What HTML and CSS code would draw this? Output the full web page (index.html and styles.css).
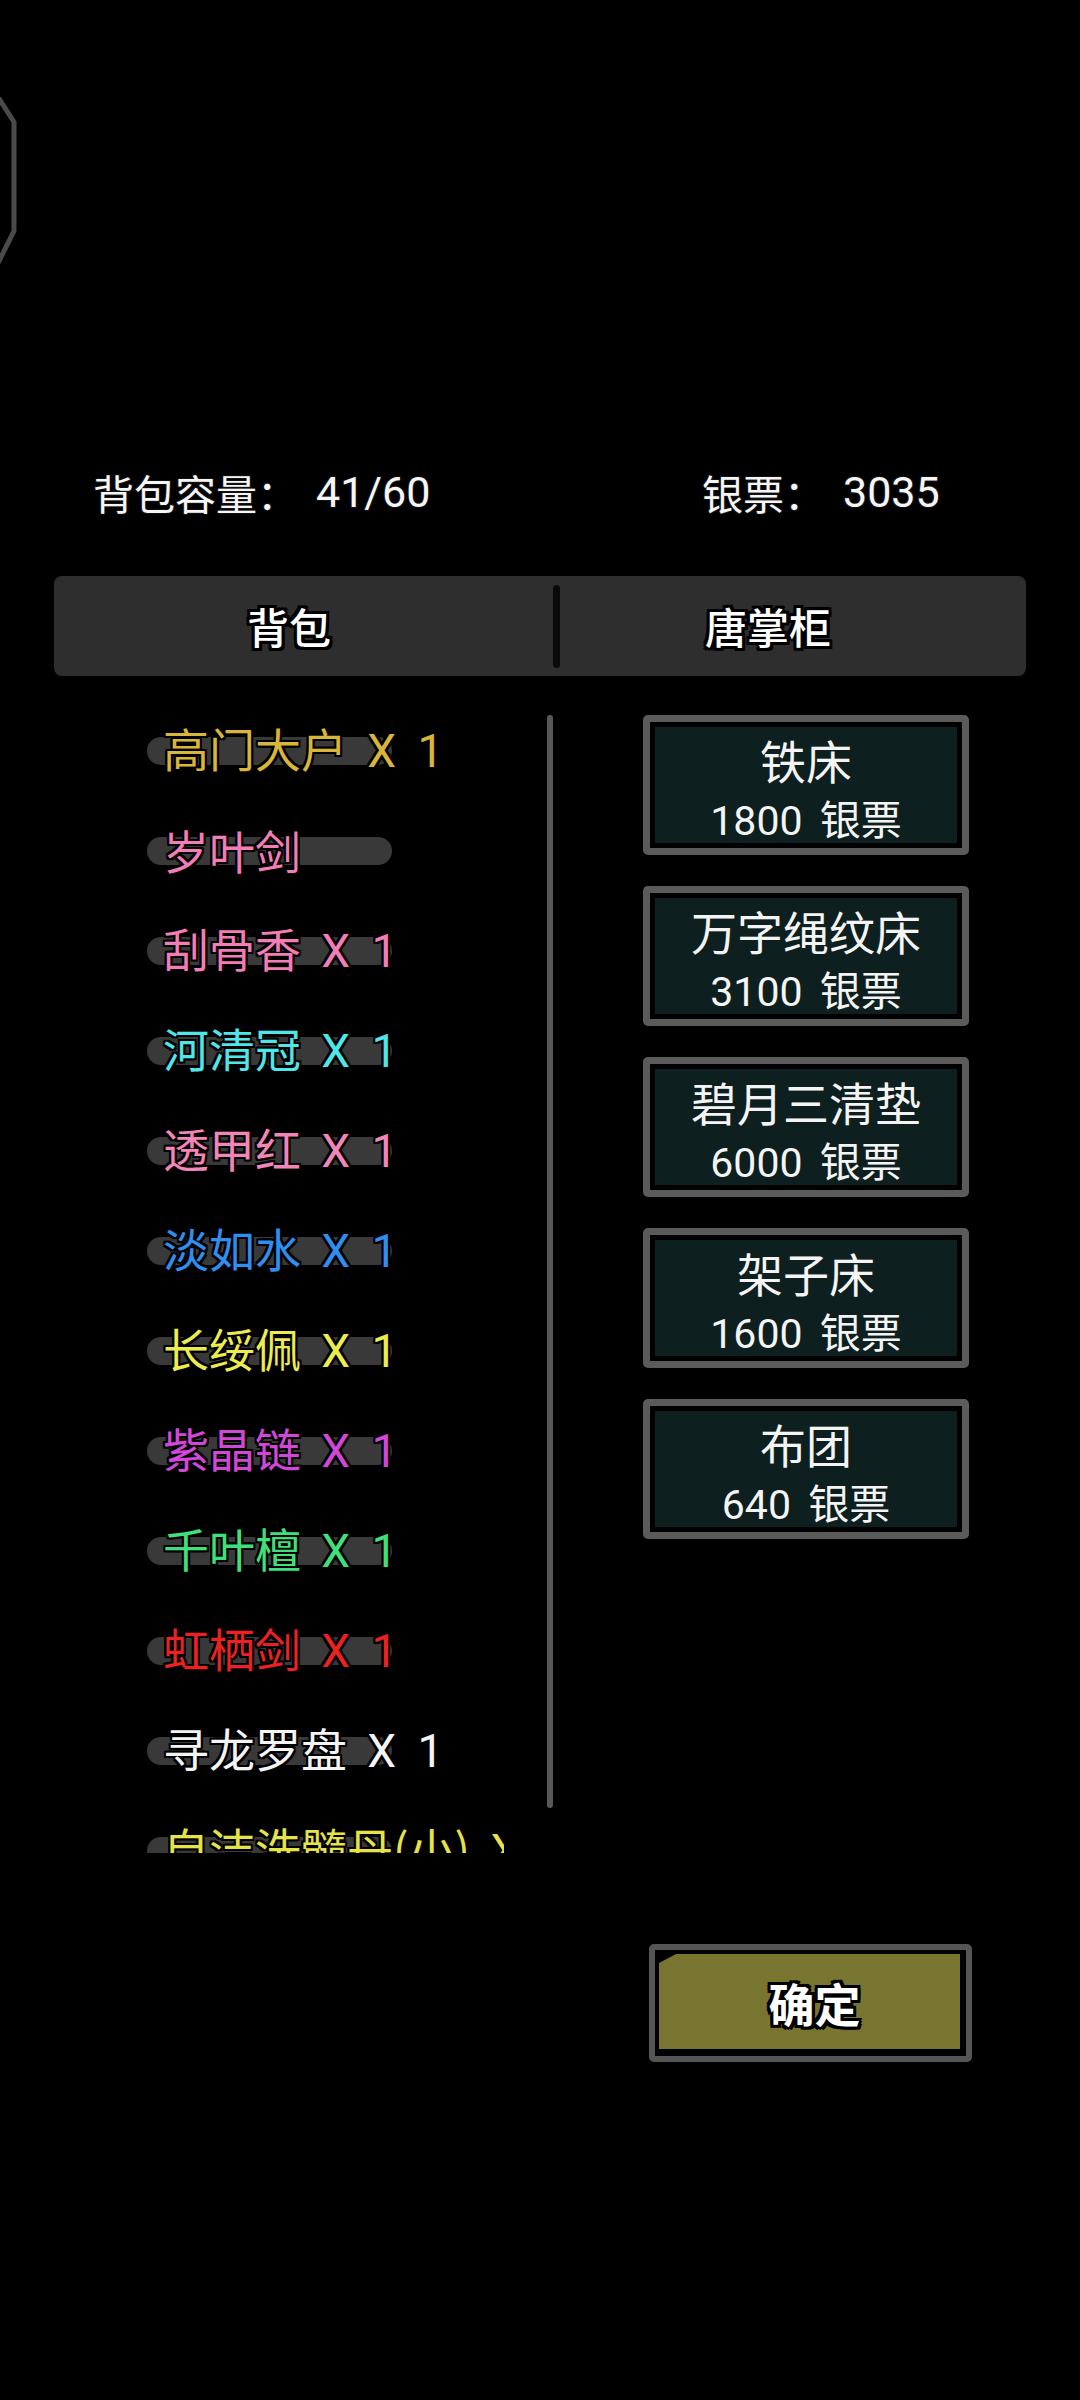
FILE: index.html
```html
<!DOCTYPE html>
<html lang="zh-CN">
<head>
<meta charset="utf-8">
<title>背包</title>
<link rel="stylesheet" href="styles.css">
</head>
<body>
<div class="screen">
  <div class="top">
    <svg class="deco" width="24" height="170" viewBox="0 0 24 170">
      <polyline points="-2,0 14,25 14,134 -2,166" fill="none" stroke="#4a4a4a" stroke-width="5" stroke-linejoin="round"/>
    </svg>
  </div>

  <div class="stats">
    <div class="stat stat-left"><span>背包容量：</span><span class="num lat">41/60</span></div>
    <div class="stat"><span>银票：</span><span class="num lat">3035</span></div>
  </div>

  <div class="tabs">
    <div class="tab tab-left">背包</div>
    <div class="divider"></div>
    <div class="tab tab-right">唐掌柜</div>
  </div>

  <div class="content">
    <div class="list">
      <div class="row c-gold"><span class="label">高门大户 <span class="lat">X 1</span></span></div>
      <div class="row c-pink"><span class="label">岁叶剑</span></div>
      <div class="row c-pink"><span class="label">刮骨香 <span class="lat">X 1</span></span></div>
      <div class="row c-cyan"><span class="label">河清冠 <span class="lat">X 1</span></span></div>
      <div class="row c-rose"><span class="label">透甲红 <span class="lat">X 1</span></span></div>
      <div class="row c-blue"><span class="label">淡如水 <span class="lat">X 1</span></span></div>
      <div class="row c-yellow"><span class="label">长绥佩 <span class="lat">X 1</span></span></div>
      <div class="row c-purple"><span class="label">紫晶链 <span class="lat">X 1</span></span></div>
      <div class="row c-green"><span class="label">千叶檀 <span class="lat">X 1</span></span></div>
      <div class="row c-red"><span class="label">虹栖剑 <span class="lat">X 1</span></span></div>
      <div class="row c-white"><span class="label">寻龙罗盘 <span class="lat">X 1</span></span></div>
      <div class="row c-yellow2"><span class="label">自洁洗髓丹(小) <span class="lat">X 1</span></span></div>
    </div>
    <div class="scrollbar"></div>
    <div class="cards">
      <div class="card"><div class="card-in"><div class="name">铁床</div><div class="price"><span class="lat">1800</span> 银票</div></div></div>
      <div class="card"><div class="card-in"><div class="name">万字绳纹床</div><div class="price"><span class="lat">3100</span> 银票</div></div></div>
      <div class="card"><div class="card-in"><div class="name">碧月三清垫</div><div class="price"><span class="lat">6000</span> 银票</div></div></div>
      <div class="card"><div class="card-in"><div class="name">架子床</div><div class="price"><span class="lat">1600</span> 银票</div></div></div>
      <div class="card"><div class="card-in"><div class="name">布团</div><div class="price"><span class="lat">640</span> 银票</div></div></div>
    </div>
  </div>

  <div class="actions">
    <div class="btn"><div class="btn-in">确定</div></div>
  </div>
</div>
</body>
</html>
```

FILE: styles.css
```css
html, body {
  margin: 0;
  padding: 0;
  background: #000;
}

body {
  font-family: "Noto Sans CJK SC", "Noto Sans", sans-serif;
  color: #f4f4f4;
}

.lat {
  font-family: Roboto, "Noto Sans", "Noto Sans CJK SC", sans-serif;
}

.screen {
  width: 1080px;
  height: 2400px;
  overflow: hidden;
  background: #000;
}

/* top decoration */
.top {
  box-sizing: border-box;
  height: 462px;
  padding-top: 97px;
}

.deco {
  display: block;
}

/* stats line */
.stats {
  display: flex;
  height: 60px;
  padding-left: 93px;
  font-size: 41px;
  line-height: 60px;
  color: #f6f6f6;
  text-shadow: -1px -1px 0 #111, 1px -1px 0 #111, -1px 1px 0 #111, 1px 1px 0 #111;
}

.stat {
  display: flex;
  white-space: nowrap;
}

.stat-left {
  width: 609px;
  flex: none;
}

.num {
  margin-left: 18px;
  font-size: 43px;
}

/* tabs */
.tabs {
  display: flex;
  align-items: center;
  height: 100px;
  margin: 54px 54px 0;
  background: #2e2e2e;
  border-radius: 8px;
}

.tab {
  box-sizing: border-box;
  text-align: center;
  font-size: 42px;
  font-weight: 500;
  line-height: 100px;
  color: #fff;
  text-shadow:
    -3px -3px 0 #000, 3px -3px 0 #000, -3px 3px 0 #000, 3px 3px 0 #000,
    0 3px 0 #000, 0 -3px 0 #000, 3px 0 0 #000, -3px 0 0 #000;
}

.tab-left {
  width: 499px;
  padding-right: 29px;
}

.tab-right {
  flex: 1;
  padding-right: 50px;
}

.divider {
  width: 7px;
  height: 83px;
  border-radius: 4px;
  background: #0a0a0a;
}

/* content */
.content {
  display: flex;
  align-items: flex-start;
  margin-top: 25px;
}

.list {
  width: 504px;
  height: 1152px;
  overflow: hidden;
  flex: none;
}

.row {
  position: relative;
  display: flex;
  align-items: center;
  height: 100px;
  padding-left: 163px;
  padding-bottom: 5px;
  box-sizing: border-box;
  white-space: nowrap;
  font-size: 46px;
  line-height: 60px;
  word-spacing: 10px;
}

.row::before {
  content: "";
  position: absolute;
  left: 147px;
  top: 36px;
  width: 245px;
  height: 28px;
  border-radius: 14px;
  background: #393939;
}

.label {
  position: relative;
  text-shadow:
    -2px -2px 0 #000, 2px -2px 0 #000, -2px 2px 0 #000, 2px 2px 0 #000,
    0 2px 0 #000, 0 -2px 0 #000, 2px 0 0 #000, -2px 0 0 #000;
}

.c-gold { color: #d9b63a; }
.c-pink { color: #f37db7; }
.c-rose { color: #f386b8; }
.c-cyan { color: #4fe6ea; }
.c-blue { color: #2f8ff0; }
.c-yellow { color: #ecec4e; }
.c-purple { color: #d247d8; }
.c-green { color: #3fe07a; }
.c-red { color: #ec2222; }
.c-white { color: #f4f4f4; }
.c-yellow2 { color: #e6e24a; }

.scrollbar {
  width: 6px;
  height: 1093px;
  margin-left: 43px;
  margin-top: 14px;
  border-radius: 3px;
  background: #585858;
  flex: none;
}

/* cards */
.cards {
  display: flex;
  flex-direction: column;
  gap: 31px;
  width: 326px;
  margin-left: 90px;
  margin-top: 14px;
  flex: none;
}

.card {
  box-sizing: border-box;
  height: 140px;
  border: 7px solid #5b5b5b;
  border-radius: 5px;
  padding: 5px;
  background: #000;
}

.card-in {
  height: 100%;
  background: #0d1f1e;
  text-align: center;
  color: #f4f4f4;
  white-space: nowrap;
}

.name {
  padding-top: 1px;
  font-size: 46px;
  line-height: 62px;
}

.price {
  margin-top: 3px;
  font-size: 41px;
  line-height: 49px;
  word-spacing: 8px;
}

/* confirm */
.actions {
  margin-top: 91px;
  padding-left: 649px;
}

.btn {
  box-sizing: border-box;
  width: 323px;
  height: 118px;
  border: 6px solid #555;
  border-radius: 5px;
  padding: 4px 6px 7px 4px;
  background: #000;
}

.btn-in {
  height: 100%;
  box-sizing: border-box;
  padding-left: 10px;
  background: #787531;
  clip-path: polygon(17px 0, 100% 0, 100% 100%, 0 100%, 0 9px);
  text-align: center;
  font-size: 46px;
  font-weight: 700;
  line-height: 96px;
  color: #fff;
  text-shadow:
    -3px -3px 0 #000, 3px -3px 0 #000, -3px 3px 0 #000, 3px 3px 0 #000,
    0 3px 0 #000, 0 -3px 0 #000, 3px 0 0 #000, -3px 0 0 #000;
}
```
